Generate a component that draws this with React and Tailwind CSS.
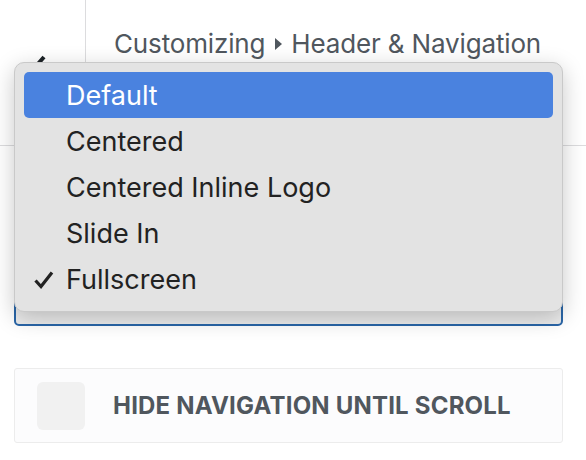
import React from "react";

const options = ["Default", "Centered", "Centered Inline Logo", "Slide In", "Fullscreen"];

function Chevron() {
  return (
    <svg className="absolute left-[26px] top-[54px]" width="22" height="38" viewBox="0 0 22 38">
      <path d="M18 3 L4 19 L18 35" fill="none" stroke="#1d2327" strokeWidth="4" strokeLinejoin="miter" />
    </svg>
  );
}

function Menu() {
  return (
    <div className="absolute left-[14px] top-[62px] w-[549px] h-[250px] rounded-[10px] bg-[#e3e3e3] border border-[#c9c9c9] shadow-[0_6px_22px_rgba(0,0,0,0.22)] px-[9px] pt-[9px]">
      {options.map((o, i) => (
        <div
          key={o}
          className={
            "relative h-[46px] flex items-center pl-[42px] pt-[3px] rounded-[5px] text-[27px] " +
            (i === 0 ? "bg-[#4a82df] text-white" : "text-[#222]")
          }
        >
          {o === "Fullscreen" && (
            <svg className="absolute left-[10px] top-[15px]" width="20" height="18" viewBox="0 0 20 18">
              <path d="M1.5 9.5 L7 15.5 L18 1.5" fill="none" stroke="#222" strokeWidth="3.2" />
            </svg>
          )}
          {o}
        </div>
      ))}
    </div>
  );
}

export default function App() {
  return (
    <div
      className="relative w-[586px] h-[460px] bg-white overflow-hidden"
      style={{ fontFamily: "Inter, 'Noto Sans', sans-serif" }}
    >
      <header className="flex h-[146px] border-b border-[#dcdcde]">
        <div className="relative w-[86px] border-r border-[#dcdcde]">
          <Chevron />
        </div>
        <div className="pl-[28px] pt-[26px] text-[26px] text-[#50575e] tracking-[-0.15px] flex items-center h-[60px]">
          <span>Customizing</span>
          <svg className="ml-[10px] mr-[9px] mt-[2px]" width="7" height="12" viewBox="0 0 7 12">
            <path d="M0 0 L7 6 L0 12 Z" fill="#50575e" />
          </svg>
          <span>Header &amp; Navigation</span>
        </div>
      </header>

      <div className="pl-[14px] pr-[23px]">
        <div className="mt-[128px] h-[52px] rounded-[5px] border-2 border-[#2a66a8] bg-[#ececec]" />

        <div className="mt-[42px] h-[75px] rounded-[3px] border border-[#ececec] bg-[#fcfcfd] flex items-center pl-[22px]">
          <div className="w-[48px] h-[48px] rounded-[6px] bg-[#f1f1f1]" />
          <span className="ml-[28px] text-[24px] font-bold text-[#50575e] tracking-[0.2px]">
            HIDE NAVIGATION UNTIL SCROLL
          </span>
        </div>
      </div>

      <Menu />
    </div>
  );
}
